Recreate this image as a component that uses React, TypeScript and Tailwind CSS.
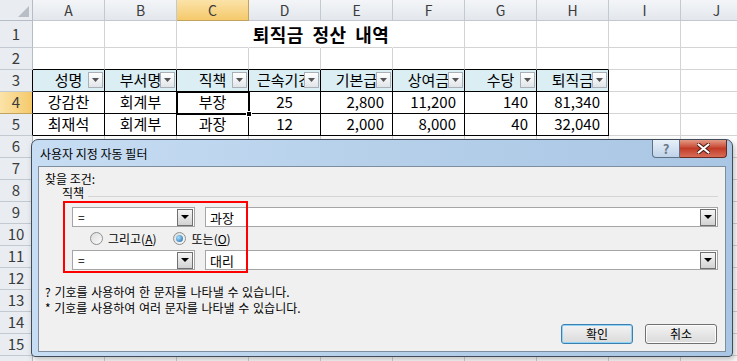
const cols = ['A', 'B', 'C', 'D', 'E', 'F', 'G', 'H', 'I', 'J']

const headers = ['성명', '부서명', '직책', '근속기간', '기본급', '상여금', '수당', '퇴직금']
const data = [
  ['강감찬', '회계부', '부장', '25', '2,800', '11,200', '140', '81,340'],
  ['최재석', '회계부', '과장', '12', '2,000', '8,000', '40', '32,040'],
]

const kr = "font-['Noto_Sans_CJK_KR','Noto_Sans',sans-serif]"

function FilterBtn() {
  return (
    <span className="absolute right-[1px] top-[2px] flex h-[16px] w-[15px] items-center justify-center border border-[#a9b0b8] bg-gradient-to-b from-[#ffffff] to-[#e2e5e9]">
      <svg width="7" height="4" viewBox="0 0 7 4">
        <path d="M0 0h7L3.5 4z" fill="#555" />
      </svg>
    </span>
  )
}

function DropBtn() {
  return (
    <span className="flex h-[17px] w-[16px] shrink-0 items-center justify-center border border-[#707070] bg-gradient-to-b from-[#f6f6f6] to-[#d2d2d2]">
      <svg width="8" height="4" viewBox="0 0 8 4">
        <path d="M0 0h8L4 4z" fill="#000" />
      </svg>
    </span>
  )
}

function Combo({ value }: { value: string }) {
  return (
    <div className="flex h-[20px] w-[123px] shrink-0 items-center border border-[#a5a5a5] bg-white pl-[5px] pr-[1px]">
      <span className="flex-1 text-[12px] leading-none">{value}</span>
      <DropBtn />
    </div>
  )
}

function Field({ value }: { value: string }) {
  return (
    <div className="ml-[10px] flex h-[20px] flex-1 items-center border border-[#a5a5a5] bg-white pl-[4px] pr-[1px]">
      <span className="flex-1 text-[13px] leading-none">{value}</span>
      <DropBtn />
    </div>
  )
}

function Radio({ checked }: { checked?: boolean }) {
  return (
    <span className="flex h-[13px] w-[13px] items-center justify-center rounded-full border border-[#8e8f8f] bg-gradient-to-br from-[#dcdcdc] to-[#fbfbfb]">
      {checked && <span className="h-[7px] w-[7px] rounded-full bg-[radial-gradient(circle_at_35%_35%,#a8e0ff,#1a64a8)]" />}
    </span>
  )
}

function Sheet() {
  const rowNums = Array.from({ length: 16 }, (_, i) => i + 1)
  return (
    <div className={`flex flex-col ${kr}`}>
      {/* column letters */}
      <div className="flex h-[21px]">
        <div className="relative w-[33px] shrink-0 border-b border-r border-[#b5bcc6] bg-[#e9edf2]">
          <svg className="absolute bottom-[3px] right-[3px]" width="11" height="11" viewBox="0 0 11 11">
            <path d="M11 0v11H0z" fill="#b8bec6" />
          </svg>
        </div>
        {cols.map((c) => (
          <div
            key={c}
            className={`flex w-[72px] shrink-0 items-center justify-center border-b border-r text-[14px] text-[#3b3b3b] ${
              c === 'C'
                ? 'border-[#c2a35e] bg-gradient-to-b from-[#fbe3a8] to-[#f5c96a]'
                : 'border-[#c3c9d1] bg-gradient-to-b from-[#f3f5f8] to-[#e3e7ec]'
            }`}
          >
            {c}
          </div>
        ))}
        <div className="flex-1 border-b border-[#c3c9d1] bg-[#e9edf2]" />
      </div>

      {rowNums.map((r) => {
        const inTable = r >= 3 && r <= 5
        return (
          <div key={r} className={`relative flex ${r === 1 ? 'h-[27px]' : 'h-[22px]'}`}>
            <div
              className={`flex w-[33px] shrink-0 items-center justify-center border-b border-r text-[15px] text-[#3b3b3b] ${
                r === 4
                  ? 'bg-gradient-to-r from-[#fbe3a8] to-[#f5c96a] border-b-[#c2a35e]'
                  : 'bg-[#e9edf2] border-b-[#c3c9d1]'
              } ${inTable ? 'border-r-black' : 'border-r-[#b5bcc6]'}`}
            >
              {r}
            </div>
            {cols.map((c, ci) => {
              const tableCol = ci < 8
              let cls = 'border-r-[#d4d4d4] border-b-[#d4d4d4] bg-white'
              if (r === 1 && (c === 'C' || c === 'D' || c === 'E')) cls = 'border-r-white border-b-[#d4d4d4] bg-white'
              if (r === 2 && tableCol) cls = 'border-r-[#d4d4d4] border-b-black bg-white'
              if (inTable && tableCol) cls = `border-r-black border-b-black ${r === 3 ? 'bg-[#dbeef4]' : 'bg-white'}`
              let content: React.ReactNode = null
              let align = 'justify-center'
              if (r === 3 && tableCol) {
                content = (
                  <>
                    <span className="whitespace-nowrap">{headers[ci]}</span>
                    <FilterBtn />
                  </>
                )
              }
              if ((r === 4 || r === 5) && tableCol) {
                content = data[r - 4][ci]
                if (ci >= 4) align = 'justify-end pr-[8px]'
              }
              return (
                <div
                  key={c}
                  className={`relative flex w-[72px] shrink-0 items-center overflow-visible border-b border-r text-[15px] text-black ${align} ${cls}`}
                >
                  {r === 3 && tableCol ? (
                    <div className="absolute inset-0 flex items-center justify-center overflow-hidden">{content}</div>
                  ) : (
                    content
                  )}
                  {r === 4 && c === 'C' && (
                    <div className="pointer-events-none absolute -left-[1px] -top-[1px] z-10 h-[24px] w-[74px] border-2 border-black">
                      <span className="absolute -bottom-[4px] -right-[4px] h-[6px] w-[6px] border border-white bg-black" />
                    </div>
                  )}
                </div>
              )
            })}
            <div className="flex-1 border-b border-[#d4d4d4] bg-white" />
            {r === 1 && (
              <div className="pointer-events-none absolute inset-y-0 left-[33px] flex w-[576px] items-center justify-center text-[18px] font-bold tracking-[0.5px] [word-spacing:4px]">
                퇴직금 정산 내역
              </div>
            )}
          </div>
        )
      })}
    </div>
  )
}

function Dialog() {
  return (
    <div
      className={`absolute left-[31px] top-[139px] flex h-[218px] w-[702px] flex-col rounded-t-[7px] rounded-b-[4px] border border-[#404c59] bg-gradient-to-r from-[#c7ddf3] via-[#b6d0ea] to-[#a9c6e4] shadow-[2px_3px_6px_rgba(0,0,0,0.25)] ${kr}`}
    >
      {/* title bar */}
      <div className="relative flex h-[26px] shrink-0 items-center pl-[8px] text-[12px] text-black">
        <span className="mt-[2px]">사용자 지정 자동 필터</span>
        <div className="absolute right-[5px] top-0 flex h-[18px]">
          <div className="flex w-[28px] items-center justify-center rounded-bl-[4px] border border-t-0 border-[#5f7186] bg-gradient-to-b from-[#e8f0f9] to-[#c0d3e9] text-[13px] font-bold text-[#6b7a8c]">
            ?
          </div>
          <div className="flex w-[47px] items-center justify-center rounded-br-[4px] border border-l-0 border-t-0 border-[#6b2a20] bg-gradient-to-b from-[#e39a86] via-[#c23b27] to-[#d86c57]">
            <svg width="13" height="11" viewBox="0 0 13 11">
              <path d="M1.5 1.5l10 8M11.5 1.5l-10 8" stroke="#4a1a12" strokeWidth="4" strokeLinecap="round" />
              <path d="M1.5 1.5l10 8M11.5 1.5l-10 8" stroke="#fff" strokeWidth="2.2" strokeLinecap="round" />
            </svg>
          </div>
        </div>
      </div>

      {/* body */}
      <div className="relative mx-[6px] mb-[4px] flex flex-1 flex-col border border-[#7f8e9e] bg-[#f0f0f0] pl-[6px] pr-[7px] pt-[5px] text-[12px] text-black">
        <div className="h-[13px] leading-[13px]">찾을 조건:</div>
        <div className="flex h-[14px] items-end">
          <span className="ml-[17px] leading-[12px]">직책</span>
          <div className="mb-[2px] ml-[4px] h-px flex-1 bg-[#d5d5d5]" />
        </div>

        <div className="ml-[27px] mt-[8px] flex items-center">
          <Combo value="=" />
          <Field value="과장" />
        </div>

        <div className="ml-[45px] flex h-[23px] items-center">
          <Radio />
          <span className="ml-[5px]">
            그리고(<u>A</u>)
          </span>
          <span className="ml-[16px]">
            <Radio checked />
          </span>
          <span className="ml-[6px]">
            또는(<u>O</u>)
          </span>
        </div>

        <div className="ml-[27px] flex items-center">
          <Combo value="=" />
          <Field value="대리" />
        </div>

        <div className="mt-[14px] h-[16px] leading-[16px] [word-spacing:1px]">? 기호를 사용하여 한 문자를 나타낼 수 있습니다.</div>
        <div className="h-[16px] leading-[16px] [word-spacing:1px]">* 기호를 사용하여 여러 문자를 나타낼 수 있습니다.</div>

        <div className="mt-[8px] flex justify-end gap-[12px] pr-[1px]">
          <button className="flex h-[20px] w-[72px] items-center justify-center rounded-[3px] border border-[#3c7fb1] bg-gradient-to-b from-[#f3f3f3] to-[#dadada] shadow-[inset_0_0_0_1px_#8fd3f5]">
            확인
          </button>
          <button className="flex h-[20px] w-[72px] items-center justify-center rounded-[3px] border border-[#707070] bg-gradient-to-b from-[#f3f3f3] to-[#dadada] shadow-[inset_0_0_0_1px_#fcfcfc]">
            취소
          </button>
        </div>

        {/* red highlight drawn over the conditions */}
        <div className="pointer-events-none absolute left-[24px] top-[34px] h-[72px] w-[185px] border-2 border-[#ff0000]" />
      </div>
    </div>
  )
}

export default function App() {
  return (
    <div className="relative h-[361px] w-[737px] overflow-hidden bg-white">
      <Sheet />
      <Dialog />
    </div>
  )
}
